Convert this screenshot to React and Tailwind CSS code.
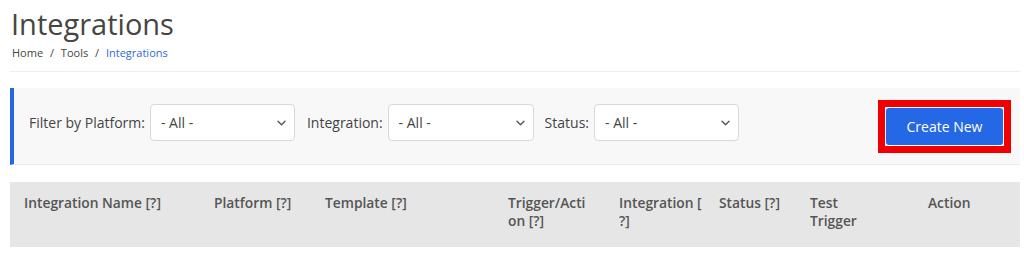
const Chevron = () => (
  <svg width="9" height="6" viewBox="0 0 9 6" fill="none">
    <path d="M1 1.2l3.5 3.5 3.5-3.5" stroke="#555" strokeWidth="1.4" strokeLinecap="round" strokeLinejoin="round" />
  </svg>
);

const FakeSelect = ({ width }) => (
  <div
    className={`flex h-[37px] items-center justify-between rounded-[4px] border border-[#d9d9d9] bg-white pl-[10px] pr-[8px] text-[14px] text-[#444] ${width}`}
  >
    <span>- All -</span>
    <Chevron />
  </div>
);

const columns = [
  { key: 'name', label: 'Integration Name [?]', width: 'w-[190px]' },
  { key: 'platform', label: 'Platform [?]', width: 'w-[111px]' },
  { key: 'template', label: 'Template [?]', width: 'w-[183px]' },
  { key: 'trigger', label: 'Trigger/Action\u00a0[?]', width: 'w-[111px]', inner: 'w-[80px] break-all' },
  {
    key: 'integration',
    label: (
      <>
        Integration [<wbr />?]
      </>
    ),
    width: 'w-[100px]',
  },
  { key: 'status', label: 'Status [?]', width: 'w-[91px]' },
  { key: 'test', label: 'Test Trigger', width: 'w-[118px]', inner: 'w-[60px]' },
  { key: 'action', label: 'Action', width: 'w-[106px]' },
];

const App = () => {
  return (
    <div
      className="h-[254px] w-[1024px] overflow-hidden bg-white"
      style={{ fontFamily: '"Open Sans", "Liberation Sans", sans-serif' }}
    >
      <div className="ml-[10px] w-[1010px]">
        {/* Header */}
        <h1 className="ml-[1px] pt-[4px] text-[29px] leading-[40px] text-[#454545]">Integrations</h1>
        <div className="ml-[2px] mt-[1px] text-[11px] leading-[15px] text-[#444]">
          Home <span className="mx-[4px]">/</span> Tools <span className="mx-[4px]">/</span>{' '}
          <span className="text-[#2f6ad6]">Integrations</span>
        </div>
        <div className="mt-[11px] border-t border-[#efefef]" />

        {/* Filters */}
        <div className="mt-[16px] flex h-[77px] items-start justify-between border-b border-l-4 border-b-[#e8e8f3] border-l-[#2566e3] bg-[#f8f8f9]">
          <div className="mt-[16px] flex items-center pl-[15px] text-[14px] text-[#444]">
            <span className="mr-[5px]">Filter by Platform:</span>
            <FakeSelect width="w-[145px]" />
            <span className="ml-[12px] mr-[5px]">Integration:</span>
            <FakeSelect width="w-[146px]" />
            <span className="ml-[11px] mr-[5px]">Status:</span>
            <FakeSelect width="w-[145px]" />
          </div>
          <div className="mr-[9px] mt-[12px] border-[7px] border-[#f00000] bg-white p-[1px]">
            <button className="h-[37px] w-[117px] rounded-[3px] bg-[#2568e5] text-[14px] text-white">
              Create New
            </button>
          </div>
        </div>

        {/* Table header */}
        <div className="mt-[17px] flex h-[65px] bg-[#e6e6e6] text-[13.8px] font-semibold leading-[18px] text-[#555]">
          {columns.map((col) => (
            <div key={col.key} className={`pl-[14px] pt-[12px] ${col.width}`}>
              <div className={col.inner || ''}>{col.label}</div>
            </div>
          ))}
        </div>
      </div>
    </div>
  );
};

export default App;
